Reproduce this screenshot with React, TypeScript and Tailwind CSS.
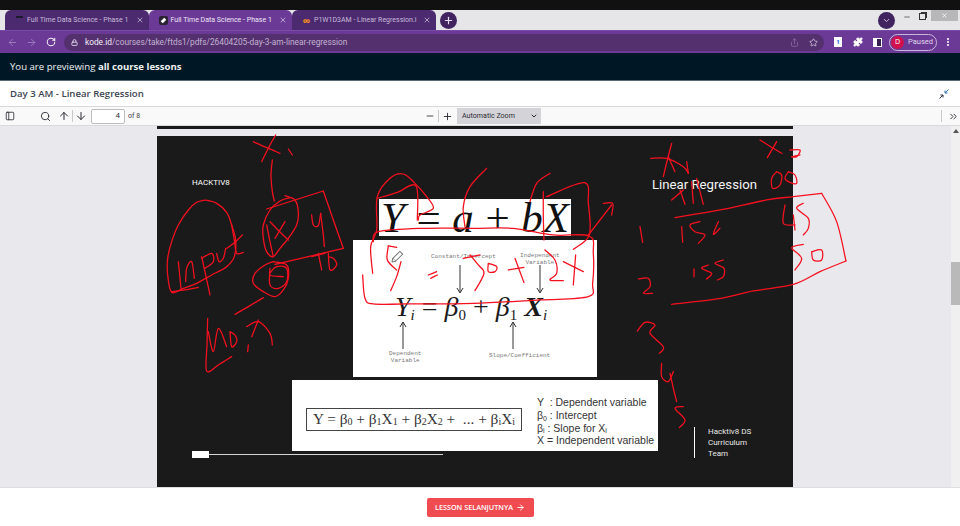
import {
  ArrowDown,
  ArrowLeft,
  ArrowRight,
  ArrowUp,
  ChevronDown,
  ChevronsRight,
  EllipsisVertical,
  Lock,
  Minus,
  PanelLeft,
  Plus,
  Puzzle,
  RotateCw,
  Search,
  Share,
  Star,
  X,
} from "lucide-react";

// pen strokes, written in 3x crop coordinates and scaled down by the groups below
const inkLeft = [
  "295,50 335,68 375,85",
  "320,110 345,60 362,30",
  "400,72 412,90",
  "352,105 348,150 352,200 358,228",
  "150,225 185,235 215,262 230,300 242,345 238,395 215,425 170,450 125,475 85,490 50,502 38,450 38,400 50,350 70,300 100,255 125,232 150,225",
  "50,500 90,495 130,487",
  "70,410 74,450 78,490",
  "92,470 95,430 110,410 118,460",
  "140,395 152,450 165,510",
  "140,400 170,385 175,410 150,430",
  "185,385 192,410 205,400 212,370",
  "230,300 238,345 245,385 265,382",
  "215,370 240,352 262,330",
  "390,212 420,225 430,260 425,300 400,340 375,370 355,395 335,380 325,340 325,300 345,255 375,228 405,218",
  "345,290 372,318 400,345",
  "390,290 375,315 360,340",
  "335,300 345,350 355,395",
  "335,252 505,198",
  "505,198 535,285 565,370",
  "565,370 460,395 360,418",
  "470,270 475,300 490,302 497,265",
  "497,265 505,330 508,365",
  "470,395 510,385",
  "490,385 500,435",
  "520,385 525,435 545,420 535,400 520,395",
  "355,410 395,420 400,460 385,495 360,515 325,500 295,475 300,445 330,420 355,410",
  "345,430 345,480 370,490 395,470 395,430 365,425 345,450 385,455",
  "325,518 280,545 240,568",
  "158,580 156,660 155,738 190,720 230,695",
  "160,620 175,680 190,610 215,665",
  "225,620 230,665 245,650 240,630 225,620",
  "275,605 310,590 345,625 352,660",
  "310,585 300,610 290,635",
  "280,660 278,680",
];

const inkMiddle = [
  "98,340 92,260 110,210 112,110 150,55 190,42 225,70 260,110 280,145 240,165 235,180",
  "112,115 170,98 228,78 232,180",
  "440,25 390,80 370,140 375,200",
  "630,40 590,70 570,125",
  "610,95 610,170 612,240",
  "620,110 733,68 745,130 748,225 700,268",
  "745,225 780,180 815,135",
  "790,130 818,130 815,165",
  "100,245 115,215 250,205 400,205 520,205 640,225 748,228 760,280 758,370 745,410 600,420 400,430 200,432 100,432 75,415 68,345",
  "145,258 170,262",
  "145,258 142,300 170,330",
  "183,305 170,350 152,392",
  "265,345 290,335",
  "272,355 292,345",
  "370,295 420,285",
  "390,285 415,315 432,340 405,392",
  "445,310 470,320 465,335 445,335 445,310",
  "505,330 552,322",
  "525,295 552,368",
  "615,270 645,300 650,340 630,360 670,362",
  "670,305 730,335",
  "707,285 700,375",
];

const inkRight = [
  "92,100 140,100 190,125 205,145",
  "155,55 142,105 130,155",
  "145,95 165,140",
  "200,110 205,145",
  "155,225 190,195",
  "180,195 195,238",
  "215,170 220,235",
  "230,160 240,200 250,238",
  "420,45 452,65 485,85",
  "470,50 442,98",
  "510,75 540,75 530,95 515,95 540,90",
  "470,140 455,160 458,190 480,180 485,150 470,140",
  "505,140 495,160 510,172 530,175 525,150 505,140",
  "165,278 300,255 440,225 520,215 605,205",
  "605,205 650,290 678,408",
  "678,408 600,440 520,478 400,498 290,522 155,538",
  "185,305 188,352",
  "240,290 210,300 225,320 255,330 235,355",
  "295,290 280,328 300,310",
  "222,432 222,455",
  "265,420 245,430 275,445 260,462",
  "310,405 285,415 312,430 310,455 292,465",
  "60,305 68,352",
  "55,462 85,460 90,485 70,505 98,505",
  "52,618 75,592 105,600 90,625 130,665 118,685",
  "125,715 125,755 145,770 160,740",
  "150,745 160,790 170,830",
  "190,845 165,850 195,885 178,908",
  "495,240 490,295 525,300",
  "520,270 525,315",
  "550,235 530,250 565,280 565,310 550,330",
  "550,358 515,368 545,400 525,435",
  "575,380 605,375 605,405 580,405 575,380",
];

// smooth a list of points into a catmull-rom style curve
const smooth = (stroke: string) => {
  const p = stroke.split(" ").map((s) => s.split(",").map(Number));
  let d = `M${p[0][0]} ${p[0][1]}`;
  for (let i = 0; i < p.length - 1; i++) {
    const a = p[Math.max(i - 1, 0)];
    const b = p[i];
    const c = p[i + 1];
    const e = p[Math.min(i + 2, p.length - 1)];
    d += `C${b[0] + (c[0] - a[0]) / 6} ${b[1] + (c[1] - a[1]) / 6} ${c[0] - (e[0] - b[0]) / 6} ${c[1] - (e[1] - b[1]) / 6} ${c[0]} ${c[1]}`;
  }
  return d;
};

const Ink = ({ strokes, x, y }: { strokes: string[]; x: number; y: number }) => (
  <g transform={`translate(${x} ${y}) scale(0.3333)`}>
    {strokes.map((stroke) => (
      <path key={stroke} d={smooth(stroke)} />
    ))}
  </g>
);

const Tab = ({ title, active, icon }: { title: string; active?: boolean; icon: React.ReactNode }) => (
  <div className={`flex h-5 w-[143.5px] items-center rounded-t-md pl-[8px] pr-[5px] ${active ? "bg-[#6a3a96]" : "bg-[#4c2a70]"}`}>
    <span className="flex w-[13px] shrink-0 items-center justify-center">{icon}</span>
    <span className={`ml-[1px] flex-1 font-['Roboto',sans-serif] text-[7px] whitespace-nowrap ${active ? "text-[#eee6f5]" : "text-[#c9bad8]"}`}>{title}</span>
    <X size={8} strokeWidth={2} className="ml-1 shrink-0 text-[#ddd3e8]" />
  </div>
);

const Browser = () => (
  <div className="shrink-0">
    <div className="h-2.5 bg-[#111111]" />
    <div className="flex h-5 items-center bg-[#e6e5e8] pl-[5px]">
      <Tab
        title="Full Time Data Science - Phase 1"
        icon={<span className="block h-[8px] w-[7px] border-t-2 border-[#1b1b2b]" />}
      />
      <Tab
        active
        title="Full Time Data Science - Phase 1"
        icon={
          <span className="flex h-[9px] w-[9px] items-center justify-center rounded-[2px] bg-[#2b2233]">
            <span className="block h-[5px] w-[3px] rotate-45 bg-white" />
          </span>
        }
      />
      <Tab
        title="P1W1D3AM - Linear Regression.i"
        icon={<span className="text-[11px] leading-none font-bold text-[#f08a24]">∞</span>}
      />
      <div className="ml-[4px] flex h-[17px] w-[17px] items-center justify-center rounded-full bg-[#40235f]">
        <Plus size={11} strokeWidth={2.5} className="text-[#e8e0ef]" />
      </div>
      <div className="ml-auto flex h-[17px] w-[17px] items-center justify-center rounded-full bg-[#40235f]">
        <ChevronDown size={9} strokeWidth={2.5} className="text-[#d5c8e2]" />
      </div>
      <div className="flex h-5 w-[65px] items-start justify-end">
        <Minus size={8} strokeWidth={2} className="mt-[3px] mr-[8px] text-[#333333]" />
        <span className="relative mt-[3px] mr-[5px] block h-[7px] w-[7px] border border-[#333333]">
          <span className="absolute -top-[2px] -right-[2px] block h-[6px] w-[6px] border-t border-r border-[#333333]" />
        </span>
        <div className="mr-[2px] flex h-[11px] w-[27px] items-center justify-center bg-[#b7b7b9]">
          <X size={7} strokeWidth={2.5} className="text-white" />
        </div>
      </div>
    </div>
    <div className="flex h-[23px] items-center border-t border-[#7a4aa8] bg-[#6a3a96] pl-[7px]">
      <ArrowLeft size={11} className="text-[#9f7fbd]" />
      <ArrowRight size={11} className="ml-[8px] text-[#9f7fbd]" />
      <RotateCw size={10} strokeWidth={2.5} className="ml-[9px] text-[#f1ebf6]" />
      <div className="ml-[8px] flex h-[17px] w-[760px] items-center rounded-full bg-[#54306f] pl-[7px] pr-[6px]">
        <Lock size={7} strokeWidth={3} className="text-[#e4dbec]" />
        <span className="ml-[7px] font-['Roboto',sans-serif] text-[8.3px] text-[#c3b3d1]">
          <span className="text-[#f3eef7]">kode.id</span>/courses/take/ftds1/pdfs/26404205-day-3-am-linear-regression
        </span>
        <Share size={9} className="ml-auto text-[#8f72a9]" />
        <Star size={9} strokeWidth={2} className="ml-[10px] text-[#d9cce5]" />
      </div>
      <div className="ml-[10px] flex h-[10px] w-[8px] items-center justify-center bg-white">
        <span className="text-[6px] leading-none font-bold text-[#2b66e0]">1</span>
      </div>
      <Puzzle size={10} fill="#ffffff" className="ml-[11px] text-white" />
      <div className="ml-[10px] flex h-[9px] w-[9px] justify-end border border-white bg-white">
        <span className="block h-full w-[4px] bg-[#3a2050]" />
      </div>
      <div className="ml-[7px] flex h-[17px] w-[48px] items-center rounded-full border border-[#c9b6dc] pl-[1px]">
        <span className="flex h-[13px] w-[13px] items-center justify-center rounded-full bg-[#d0124f] text-[7px] text-white">D</span>
        <span className="ml-[4px] font-['Roboto',sans-serif] text-[7.5px] text-[#e0d6ea]">Paused</span>
      </div>
      <EllipsisVertical size={10} strokeWidth={3} className="ml-[6px] text-white" />
    </div>
  </div>
);

const PdfToolbar = () => (
  <div className="relative flex h-[20px] shrink-0 items-center border-t border-b border-[#d9d9dc] bg-[#f9f9fa] pl-[5px] font-['Roboto',sans-serif] text-[#2b2b33]">
    <PanelLeft size={10} />
    <Search size={11} className="ml-[25px]" />
    <ArrowUp size={12} className="ml-[7px]" />
    <span className="ml-[2px] h-3 w-px bg-[#c9c9cc]" />
    <ArrowDown size={12} className="ml-[2px]" />
    <div className="ml-[4px] flex h-[15px] w-[34px] items-center justify-end rounded-[2px] border border-[#bdbdc0] bg-white pr-[4px] text-[8px] text-[#333333]">4</div>
    <span className="ml-[3px] w-[12px] text-[7px] whitespace-nowrap text-[#444444]">of 8</span>
    <Minus size={10} className="ml-[285px]" />
    <span className="ml-[3px] h-3 w-px bg-[#c9c9cc]" />
    <Plus size={11} className="ml-[3px]" />
    <div className="ml-[4px] flex h-[16px] w-[84px] items-center justify-between bg-[#d4d3d8] pr-[3px] pl-[5px] text-[7.1px] text-[#2b2b33]">
      <span>Automatic Zoom</span>
      <ChevronDown size={8} strokeWidth={3} />
    </div>
    <span className="ml-auto h-3 w-px bg-[#c9c9cc]" />
    <ChevronsRight size={11} className="mr-[1px] ml-[6px]" />
  </div>
);

const Slide = () => (
  <div className="relative ml-[157px] h-[351px] w-[636px] shrink-0 bg-[#1a1a1a] font-['Roboto',sans-serif] text-white">
    <span className="absolute top-[41px] left-[35px] text-[8px]">HACKTIV8</span>
    <span className="absolute top-[39px] left-[495px] text-[13.2px] leading-[20px] text-[#f5f5f5]">Linear Regression</span>

    <div className="absolute top-[63px] left-[222px] flex h-[37px] w-[192px] items-center justify-between bg-white pr-[2px] pl-[2px] font-['Liberation_Serif',serif] text-[43px] leading-none whitespace-nowrap text-[#111111]">
      <i>Y</i><span>=</span><i>a</i><span>+</span>
      <span><i>b</i><i>X</i></span>
    </div>

    <div className="absolute top-[104px] left-[196px] h-[137px] w-[244px] bg-white font-['Liberation_Mono',monospace] text-[6px] leading-[7px] text-[#777777]">
      <span className="absolute top-[13px] left-[78px]">Constant/Intercept</span>
      <span className="absolute top-[12px] left-[167px] text-center">Independent<br />Variable</span>
      <span className="absolute top-[110px] left-[36px] text-center">Dependent<br />Variable</span>
      <span className="absolute top-[112px] left-[136px]">Slope/Coefficient</span>
      <div className="absolute top-[51px] left-[42px] font-['Liberation_Serif',serif] text-[28px] leading-[32px] whitespace-nowrap text-[#1a1a1a]">
        <i>Y</i><sub className="text-[15px] italic">i</sub>&nbsp;=&nbsp;<i>β</i><sub className="text-[15px]">0</sub>&nbsp;+&nbsp;<i>β</i><sub className="text-[15px]">1</sub>&nbsp;<i className="font-bold">X</i><sub className="text-[15px] italic">i</sub>
      </div>
      <svg width="244" height="137" className="absolute top-0 left-0" fill="none" stroke="#333333" strokeWidth="1">
        <path d="M107 25V52M104 48l3 5 3-5" />
        <path d="M187 25V52M184 48l3 5 3-5" />
        <path d="M50 109V82M47 87l3-5 3 5" />
        <path d="M160 109V82M157 87l3-5 3 5" />
      </svg>
    </div>

    <div className="absolute top-[244px] left-[135px] flex h-[71px] w-[366px] items-center bg-white pl-[14px] text-[#333333]">
      <div className="mt-[8px] flex h-[23px] w-[216px] shrink-0 items-center justify-center border border-[#444444] font-['Liberation_Serif',serif] text-[15.3px] whitespace-nowrap">
        Y = β<sub className="text-[10px]">0</sub>&nbsp;+ β<sub className="text-[10px]">1</sub>X<sub className="text-[10px]">1</sub>&nbsp;+ β<sub className="text-[10px]">2</sub>X<sub className="text-[10px]">2</sub>&nbsp;+ &nbsp;... + β<sub className="text-[10px]">i</sub>X<sub className="text-[10px]">i</sub>
      </div>
      <div className="mt-[12px] ml-[15px] font-['Liberation_Sans',sans-serif] text-[10.5px] leading-[12.7px] whitespace-nowrap">
        <div>Y &nbsp;: Dependent variable</div>
        <div>β<sub className="text-[7px]">0</sub> : Intercept</div>
        <div>β<sub className="text-[7px]">i</sub> : Slope for X<sub className="text-[7px]">i</sub></div>
        <div>X = Independent variable</div>
      </div>
    </div>

    <div className="absolute top-[315px] left-[35px] flex w-[251px] items-center">
      <span className="h-[7px] w-[17px] bg-white" />
      <span className="h-px flex-1 bg-[#d5d5d5]" />
    </div>

    <div className="absolute top-[291px] left-[537px] h-[31px] w-px bg-white" />
    <div className="absolute top-[290px] left-[551px] text-[8px] leading-[11px] text-[#e8e8e8]">
      Hacktiv8 DS<br />Curriculum<br />Team
    </div>

    <svg
      width="700"
      height="351"
      viewBox="157 136 700 351"
      className="absolute top-0 left-0 overflow-visible"
      fill="none"
      stroke="#f5101f"
      strokeWidth="3.8"
      strokeLinecap="round"
      strokeLinejoin="round"
    >
      <Ink strokes={inkLeft} x={155} y={125} />
      <Ink strokes={inkMiddle} x={340} y={160} />
      <Ink strokes={inkRight} x={620} y={125} />
      <g transform="translate(397 257) rotate(45)" stroke="#777777" strokeWidth="1" fill="#ffffff">
        <rect x="-2" y="-6" width="4" height="10" />
        <path d="M-2 4L0 7L2 4" />
      </g>
    </svg>
  </div>
);

export default function App() {
  return (
    <div className="flex h-[526px] w-[960px] flex-col overflow-hidden bg-white font-['Open_Sans',sans-serif]">
      <Browser />
      <div className="flex h-[28px] shrink-0 items-center border-b border-[#5b6b75] bg-[#001826] pl-[10px] text-[9.6px] text-[#eef1f3]">
        <span className="mt-[2px]">You are previewing <b>all course lessons</b></span>
      </div>
      <div className="flex h-[25px] shrink-0 items-center justify-between pr-[11px] pl-[10px] text-[9.6px] font-semibold text-[#3c4650]">
        <span className="mt-[1px]">Day 3 AM - Linear Regression</span>
        <svg width="10" height="10" viewBox="0 0 10 10" fill="none" stroke="#2b3440" strokeWidth="1">
          <path d="M9.5.5L6 4M6 1.5V4H8.5" stroke="#2b6bb0" />
          <path d="M.5 9.5L4 6M1.5 6H4V8.5" />
        </svg>
      </div>
      <PdfToolbar />
      <div className="relative flex min-h-0 flex-1 bg-[#e9e8ec]">
        <div className="min-w-0 flex-1">
          <div className="ml-[157px] h-[3px] w-[636px] bg-[#1a1a1a]" />
          <div className="h-[7px]" />
          <Slide />
        </div>
        <div className="absolute top-0 right-0 bottom-0 w-[9px] bg-[#f0f0f1]">
          <span className="absolute top-[3px] left-[2px] h-0 w-0 border-x-[3px] border-b-[4px] border-x-transparent border-b-[#555555]" />
          <span className="absolute top-[136px] left-0 h-[43px] w-[9px] bg-[#b9b9ba]" />
        </div>
      </div>
      <div className="flex h-[39px] shrink-0 items-center justify-center border-t border-[#dcdfe2] bg-white">
        <div className="flex h-[19px] w-[107px] items-center justify-center gap-[3px] rounded-[2px] bg-[#ef4b51] text-[7.25px] font-semibold text-white">
          LESSON SELANJUTNYA
          <ArrowRight size={9} strokeWidth={2.5} />
        </div>
      </div>
    </div>
  );
}
